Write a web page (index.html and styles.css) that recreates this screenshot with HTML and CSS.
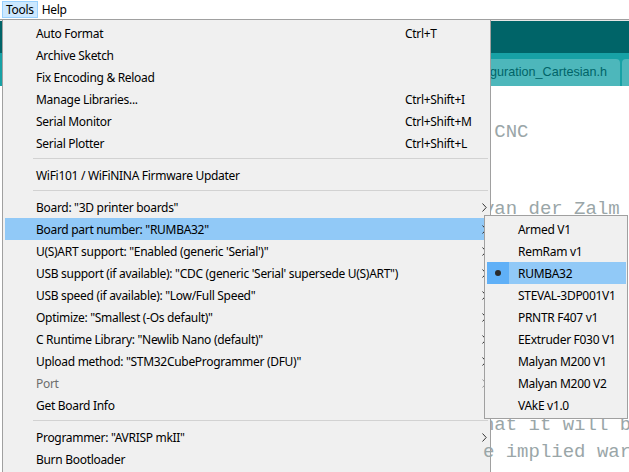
FILE: index.html
```html
<!DOCTYPE html>
<html lang="en">
<head>
<meta charset="utf-8">
<title>Arduino - Tools menu</title>
<link rel="stylesheet" href="styles.css">
</head>
<body>
<div class="app">
  <div class="menubar">
    <span class="mb-item open">Tools</span>
    <span class="mb-item">Help</span>
  </div>
  <div class="toolbar"></div>
  <div class="tabstrip">
    <div class="tab">Configuration_Cartesian.h</div>
    <div class="tab next"></div>
  </div>
  <div class="editor">
    <div class="ln"></div>
    <div class="ln c43">CNC</div>
    <div class="ln"></div>
    <div class="ln"></div>
    <div class="ln c42 short">van der Zalm</div>
    <div class="ln"></div>
    <div class="ln"></div>
    <div class="ln"></div>
    <div class="ln"></div>
    <div class="ln"></div>
    <div class="ln"></div>
    <div class="ln"></div>
    <div class="ln c42">hat it will be useful,</div>
    <div class="ln c42 over">e implied warranty of</div>
  </div>
</div>

<div class="menu">
  <div class="mi"><span class="chk"></span><span class="lbl">Auto Format</span><span class="key">Ctrl+T</span><span class="arr"></span></div>
  <div class="mi"><span class="chk"></span><span class="lbl">Archive Sketch</span><span class="key"></span><span class="arr"></span></div>
  <div class="mi"><span class="chk"></span><span class="lbl">Fix Encoding &amp; Reload</span><span class="key"></span><span class="arr"></span></div>
  <div class="mi"><span class="chk"></span><span class="lbl">Manage Libraries...</span><span class="key">Ctrl+Shift+I</span><span class="arr"></span></div>
  <div class="mi"><span class="chk"></span><span class="lbl">Serial Monitor</span><span class="key">Ctrl+Shift+M</span><span class="arr"></span></div>
  <div class="mi"><span class="chk"></span><span class="lbl">Serial Plotter</span><span class="key">Ctrl+Shift+L</span><span class="arr"></span></div>
  <div class="sep"></div>
  <div class="mi"><span class="chk"></span><span class="lbl">WiFi101 / WiFiNINA Firmware Updater</span><span class="key"></span><span class="arr"></span></div>
  <div class="sep"></div>
  <div class="mi"><span class="chk"></span><span class="lbl">Board: "3D printer boards"</span><span class="key"></span><span class="arr"><svg class="chev" width="5" height="9" viewBox="0 0 5 9"><polyline points="0.5,0.5 4.2,4.5 0.5,8.5"/></svg></span></div>
  <div class="mi hl"><span class="chk"></span><span class="lbl">Board part number: "RUMBA32"</span><span class="key"></span><span class="arr"><svg class="chev" width="5" height="9" viewBox="0 0 5 9"><polyline points="0.5,0.5 4.2,4.5 0.5,8.5"/></svg></span></div>
  <div class="mi"><span class="chk"></span><span class="lbl">U(S)ART support: "Enabled (generic 'Serial')"</span><span class="key"></span><span class="arr"><svg class="chev" width="5" height="9" viewBox="0 0 5 9"><polyline points="0.5,0.5 4.2,4.5 0.5,8.5"/></svg></span></div>
  <div class="mi"><span class="chk"></span><span class="lbl">USB support (if available): "CDC (generic 'Serial' supersede U(S)ART")</span><span class="key"></span><span class="arr"><svg class="chev" width="5" height="9" viewBox="0 0 5 9"><polyline points="0.5,0.5 4.2,4.5 0.5,8.5"/></svg></span></div>
  <div class="mi"><span class="chk"></span><span class="lbl">USB speed (if available): "Low/Full Speed"</span><span class="key"></span><span class="arr"><svg class="chev" width="5" height="9" viewBox="0 0 5 9"><polyline points="0.5,0.5 4.2,4.5 0.5,8.5"/></svg></span></div>
  <div class="mi"><span class="chk"></span><span class="lbl">Optimize: "Smallest (-Os default)"</span><span class="key"></span><span class="arr"><svg class="chev" width="5" height="9" viewBox="0 0 5 9"><polyline points="0.5,0.5 4.2,4.5 0.5,8.5"/></svg></span></div>
  <div class="mi"><span class="chk"></span><span class="lbl">C Runtime Library: "Newlib Nano (default)"</span><span class="key"></span><span class="arr"><svg class="chev" width="5" height="9" viewBox="0 0 5 9"><polyline points="0.5,0.5 4.2,4.5 0.5,8.5"/></svg></span></div>
  <div class="mi"><span class="chk"></span><span class="lbl">Upload method: "STM32CubeProgrammer (DFU)"</span><span class="key"></span><span class="arr"><svg class="chev" width="5" height="9" viewBox="0 0 5 9"><polyline points="0.5,0.5 4.2,4.5 0.5,8.5"/></svg></span></div>
  <div class="mi dis"><span class="chk"></span><span class="lbl">Port</span><span class="key"></span><span class="arr"><svg class="chev" width="5" height="9" viewBox="0 0 5 9"><polyline points="0.5,0.5 4.2,4.5 0.5,8.5"/></svg></span></div>
  <div class="mi"><span class="chk"></span><span class="lbl">Get Board Info</span><span class="key"></span><span class="arr"></span></div>
  <div class="sep"></div>
  <div class="mi"><span class="chk"></span><span class="lbl">Programmer: "AVRISP mkII"</span><span class="key"></span><span class="arr"><svg class="chev" width="5" height="9" viewBox="0 0 5 9"><polyline points="0.5,0.5 4.2,4.5 0.5,8.5"/></svg></span></div>
  <div class="mi"><span class="chk"></span><span class="lbl">Burn Bootloader</span><span class="key"></span><span class="arr"></span></div>
</div>

<div class="submenu">
  <div class="si"><span class="chk"></span><span class="lbl">Armed V1</span></div>
  <div class="si"><span class="chk"></span><span class="lbl">RemRam v1</span></div>
  <div class="si hl"><span class="chk"><span class="dot"></span></span><span class="lbl">RUMBA32</span></div>
  <div class="si"><span class="chk"></span><span class="lbl">STEVAL-3DP001V1</span></div>
  <div class="si"><span class="chk"></span><span class="lbl">PRNTR F407 v1</span></div>
  <div class="si"><span class="chk"></span><span class="lbl">EExtruder F030 V1</span></div>
  <div class="si"><span class="chk"></span><span class="lbl">Malyan M200 V1</span></div>
  <div class="si"><span class="chk"></span><span class="lbl">Malyan M200 V2</span></div>
  <div class="si"><span class="chk"></span><span class="lbl">VAkE v1.0</span></div>
</div>
</body>
</html>
```

FILE: styles.css
```css
html, body {
  margin: 0;
  padding: 0;
}

body {
  width: 629px;
  height: 472px;
  overflow: hidden;
  position: relative;
  background: #ffffff;
  font-family: "Noto Sans", "Open Sans", sans-serif;
  font-size: 12px;
  letter-spacing: -0.3px;
  color: #000;
}

.app {
  display: flex;
  flex-direction: column;
}

/* ---------- menu bar ---------- */
.menubar {
  height: 20px;
  box-sizing: border-box;
  display: flex;
  align-items: flex-start;
  padding: 1px 0 0 2px;
  background: #ffffff;
  border-bottom: 1px solid #a0a0a0;
}

.mb-item {
  height: 17px;
  box-sizing: border-box;
  border: 1px solid transparent;
  padding: 0 3px;
  line-height: 15px;
}

.mb-item.open {
  background: #cce8ff;
  border-color: #99d1ff;
}

/* ---------- toolbar + tabs ---------- */
.toolbar {
  height: 33px;
  box-sizing: border-box;
  border-top: 1px solid #e6e6e6;
  background: #006468;
}

.tabstrip {
  height: 33px;
  box-sizing: border-box;
  background: #17a1a5;
  display: flex;
  align-items: flex-end;
  gap: 2px;
  padding-left: 457px;
}

.tab {
  flex: none;
  width: 163px;
  height: 27px;
  box-sizing: border-box;
  padding-right: 13px;
  background: #4db7bb;
  border-radius: 4px 4px 0 0;
  color: #006468;
  font-family: "Liberation Sans", Arial, sans-serif;
  font-size: 12.6px;
  letter-spacing: 0;
  line-height: 27px;
  text-align: right;
  white-space: nowrap;
  overflow: hidden;
}

.tab.next {
  width: 140px;
}

/* ---------- editor ---------- */
.editor {
  padding: 6px 0 0 4px;
  font-family: "Liberation Mono", "Courier New", monospace;
  font-size: 19px;
  letter-spacing: 0;
  line-height: 26.67px;
  color: #9aa6a8;
}

.ln {
  height: 26.67px;
  white-space: pre;
}

.ln.short {
  line-height: 21px;
}

.c42 {
  padding-left: 42ch;
}

.c43 {
  padding-left: 43ch;
}

.ln.over {
  position: relative;
  z-index: 1;
}

/* ---------- dropdown menus ---------- */
.menu {
  position: absolute;
  left: 2px;
  top: 19px;
  width: 489px;
  box-sizing: border-box;
  border: 1px solid #a0a0a0;
  background: #f0f0f0;
  padding: 2px;
}

.mi {
  display: grid;
  grid-template-columns: 31px 369px 1fr 10px;
  height: 22px;
  align-items: center;
  white-space: nowrap;
}

.mi.hl,
.si.hl {
  background: #91c9f7;
}

.mi.dis {
  color: #6d6d6d;
}

.chk {
  width: 22px;
  height: 22px;
  display: flex;
  align-items: center;
  justify-content: center;
}

.arr {
  display: flex;
  align-items: center;
  height: 22px;
}

.chev {
  display: block;
  margin-left: 4px;
  fill: none;
  stroke: #333333;
  stroke-width: 1;
}

.mi.dis .chev {
  stroke: #9a9a9a;
}

.sep {
  height: 10px;
  box-sizing: border-box;
  padding: 4px 0 0 28px;
}

.sep::after {
  content: "";
  display: block;
  height: 1px;
  background: #d2d2d2;
}

.submenu {
  position: absolute;
  left: 484px;
  top: 215px;
  width: 144px;
  box-sizing: border-box;
  border: 1px solid #a0a0a0;
  background: #f0f0f0;
  padding: 2px 1px 2px 2px;
}

.si {
  display: grid;
  grid-template-columns: 31px 1fr;
  height: 22px;
  align-items: center;
  white-space: nowrap;
}

.si.hl .chk {
  background: #60b0f7;
}

.dot {
  width: 6px;
  height: 6px;
  border-radius: 50%;
  background: #2a2a2a;
}
```
